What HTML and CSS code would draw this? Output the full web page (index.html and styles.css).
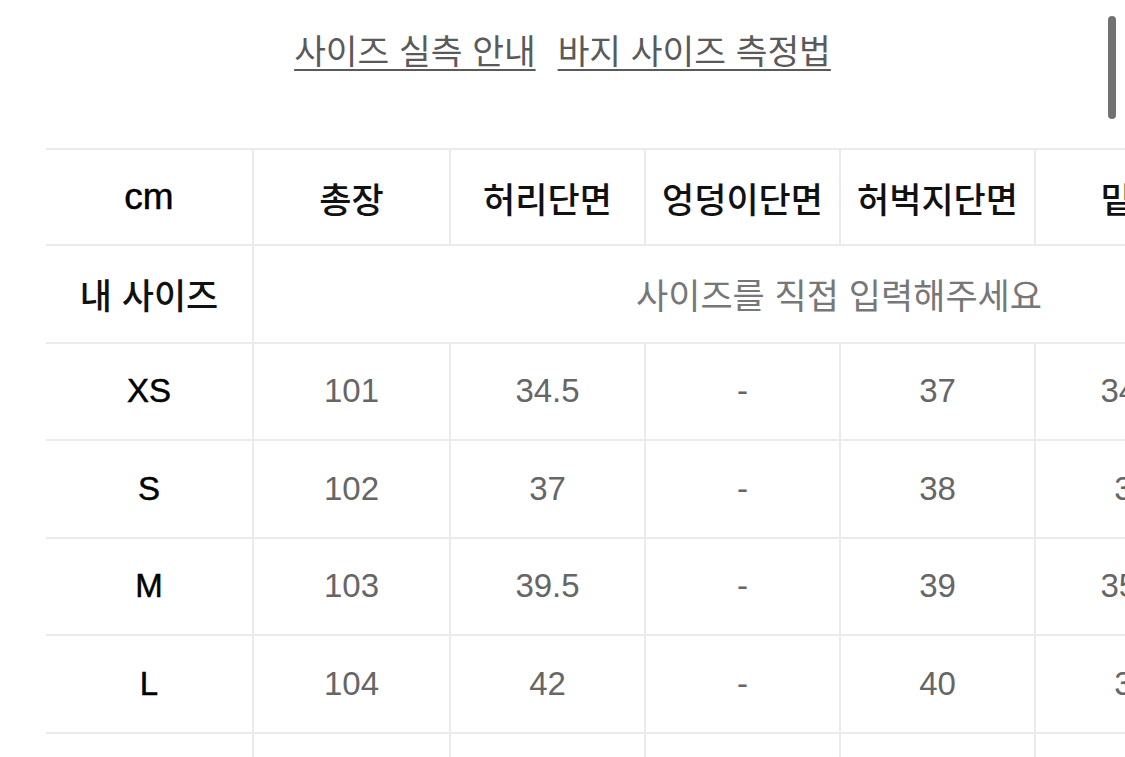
FILE: index.html
```html
<!DOCTYPE html>
<html lang="ko">
<head>
<meta charset="utf-8">
<link rel="stylesheet" href="styles.css">
</head>
<body>
<div class="page">
  <nav class="links">
    <a class="link" href="#">사이즈 실측 안내</a>
    <a class="link" href="#">바지 사이즈 측정법</a>
  </nav>
  <div class="scroll-thumb"></div>
  <div class="table-wrap">
    <table class="size-table">
      <colgroup>
        <col class="c-first"><col class="c-second"><col class="c"><col class="c"><col class="c"><col class="c"><col class="c">
      </colgroup>
      <thead>
        <tr class="head-row">
          <th class="latin unit">cm</th>
          <th>총장</th>
          <th>허리단면</th>
          <th>엉덩이단면</th>
          <th>허벅지단면</th>
          <th>밑위</th>
          <th>밑단단면</th>
        </tr>
      </thead>
      <tbody>
        <tr>
          <th>내 사이즈</th>
          <td class="mine" colspan="6">사이즈를 직접 입력해주세요</td>
        </tr>
        <tr>
          <th class="latin">XS</th>
          <td>101</td><td>34.5</td><td>-</td><td>37</td><td>34.5</td><td>17</td>
        </tr>
        <tr>
          <th class="latin">S</th>
          <td>102</td><td>37</td><td>-</td><td>38</td><td>35</td><td>17.5</td>
        </tr>
        <tr>
          <th class="latin">M</th>
          <td>103</td><td>39.5</td><td>-</td><td>39</td><td>35.5</td><td>18</td>
        </tr>
        <tr>
          <th class="latin">L</th>
          <td>104</td><td>42</td><td>-</td><td>40</td><td>36</td><td>18.5</td>
        </tr>
        <tr>
          <th class="latin">XL</th>
          <td>105</td><td>44.5</td><td>-</td><td>41</td><td>36.5</td><td>19</td>
        </tr>
      </tbody>
    </table>
  </div>
</div>
</body>
</html>
```

FILE: styles.css
```css
html, body {
  margin: 0;
  padding: 0;
  background: #ffffff;
}

body {
  font-family: "Noto Sans CJK KR", "Noto Sans", sans-serif;
  overflow: hidden;
}

.page {
  position: relative;
  width: 1125px;
  height: 757px;
  overflow: hidden;
}

.links {
  display: flex;
  justify-content: center;
  gap: 22px;
  padding-top: 24px;
  height: 122px;
  box-sizing: border-box;
}

.link {
  color: #5a5a5a;
  font-size: 34.5px;
  line-height: 50px;
  text-decoration: underline;
  text-decoration-thickness: 2px;
  text-underline-offset: 5px;
}

.scroll-thumb {
  position: absolute;
  top: 16px;
  right: 9px;
  width: 8px;
  height: 103px;
  border-radius: 4px;
  background: #727272;
}

.table-wrap {
  padding-left: 46px;
  padding-top: 26px;
}

.size-table {
  border-collapse: collapse;
  table-layout: fixed;
  width: 1380px;
}

.c-first { width: 207px; }
.c-second { width: 197px; }
.c { width: 195px; }

.size-table th,
.size-table td {
  height: 97.5px;
  padding: 0;
  border: 2px solid #ebebeb;
  text-align: center;
  vertical-align: middle;
  box-sizing: border-box;
}

.size-table .head-row th {
  height: 96px;
}

.size-table tr > :first-child {
  border-left: none;
}

.size-table th {
  color: #111111;
  font-size: 35px;
  font-weight: 500;
}

.size-table th.latin {
  font-family: "Liberation Sans", "Noto Sans", sans-serif;
  font-size: 33px;
  font-weight: 400;
  color: #000000;
  -webkit-text-stroke: 0.5px #000000;
}

.size-table th.unit {
  font-size: 37px;
}

.size-table td {
  font-family: "Liberation Sans", "Noto Sans", sans-serif;
  font-size: 33px;
  color: #666666;
  font-weight: 400;
}

.size-table td.mine {
  font-family: "Noto Sans CJK KR", "Noto Sans", sans-serif;
  font-size: 35px;
  color: #777777;
}
```
